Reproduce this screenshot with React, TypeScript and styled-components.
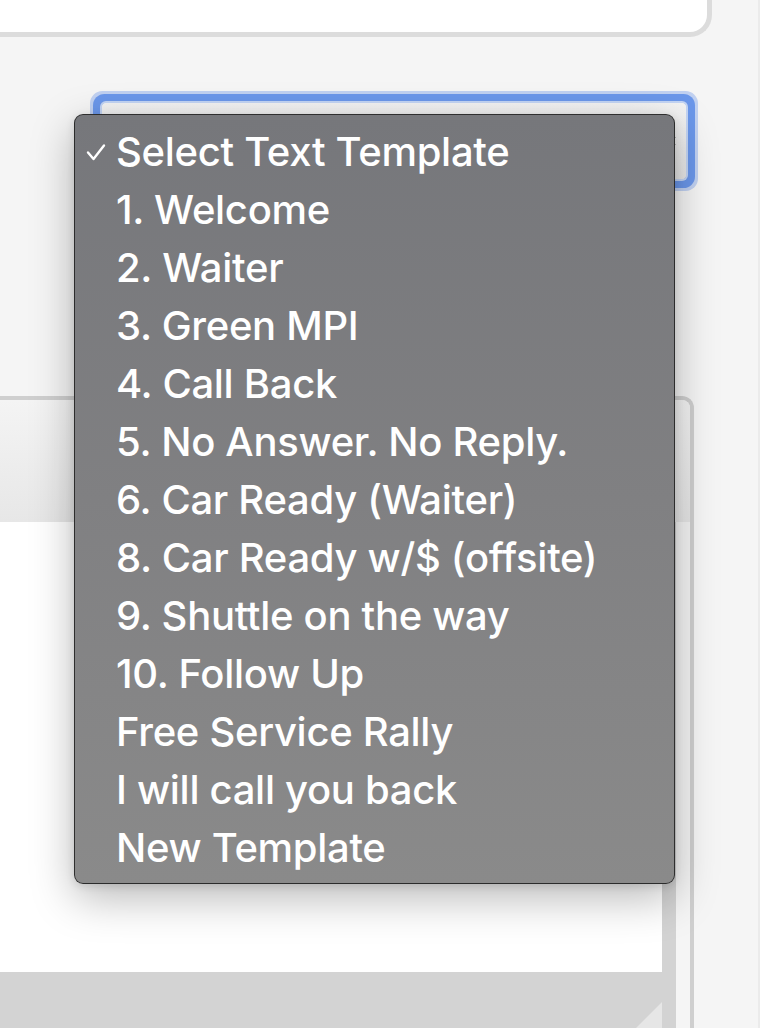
import styled, { createGlobalStyle } from 'styled-components';

const templates = [
  'Select Text Template',
  '1. Welcome',
  '2. Waiter',
  '3. Green MPI',
  '4. Call Back',
  '5. No Answer. No Reply.',
  '6. Car Ready (Waiter)',
  '8. Car Ready w/$ (offsite)',
  '9. Shuttle on the way',
  '10. Follow Up',
  'Free Service Rally',
  'I will call you back',
  'New Template',
];

const GlobalStyle = createGlobalStyle`
  html, body {
    margin: 0;
    padding: 0;
    background: #f5f5f5;
  }

  body {
    font-family: Inter, 'Liberation Sans', sans-serif;
  }
`;

const Page = styled.div`
  width: 760px;
  height: 1028px;
  box-sizing: border-box;
  display: flex;
  flex-direction: column;
  overflow: hidden;
  background: #f5f5f5;
  border-right: 2px solid #ebebeb;
`;

const TopCard = styled.div`
  flex: none;
  margin-left: -20px;
  width: 732px;
  height: 37px;
  box-sizing: border-box;
  background: #fff;
  border-right: 5px solid #dcdcdc;
  border-bottom: 5px solid #dcdcdc;
  border-bottom-right-radius: 22px;
`;

const SelectRow = styled.div`
  flex: none;
  display: flex;
  padding-left: 102px;
  margin-top: 66px;
`;

const SelectBox = styled.div`
  position: relative;
  width: 584px;
  height: 76px;
  box-sizing: border-box;
  display: flex;
  align-items: center;
  justify-content: flex-end;
  padding-right: 8px;
  border-radius: 4px;
  background: linear-gradient(180deg, #f3f3f3, #e7e7e7);
  box-shadow:
    0 0 0 2px #c4d5f4,
    0 0 0 9px #6b97ea,
    0 0 0 12px rgba(107, 151, 234, 0.38);
`;

const Arrows = styled.svg`
  width: 14px;
  height: 24px;
`;

const Menu = styled.ul`
  position: absolute;
  z-index: 10;
  left: -28px;
  top: 11px;
  width: 601px;
  height: 770px;
  box-sizing: border-box;
  margin: 0;
  padding: 8px 0;
  list-style: none;
  border: 1px solid rgba(30, 30, 30, 0.85);
  border-radius: 9px;
  background: linear-gradient(180deg, #76777b 0%, #808082 50%, #8a8a8a 100%);
  box-shadow: 0 14px 44px rgba(0, 0, 0, 0.28), 0 2px 8px rgba(0, 0, 0, 0.12);
`;

const Item = styled.li`
  display: flex;
  align-items: center;
  height: 58px;
  padding-left: 41px;
  position: relative;
  color: #fff;
  font-size: 40px;
  font-weight: 500;
  line-height: 58px;
  letter-spacing: -0.3px;
  white-space: nowrap;
`;

const Check = styled.svg`
  position: absolute;
  left: 11px;
  top: 20px;
  width: 20px;
  height: 18px;
`;

const Panel = styled.div`
  flex: 1;
  margin-top: 217px;
  margin-left: -20px;
  width: 714px;
  box-sizing: border-box;
  display: flex;
  flex-direction: column;
  border-top: 4px solid #cfcfcf;
  border-right: 4px solid #cfcfcf;
  border-top-right-radius: 12px;
  overflow: hidden;
`;

const PanelHeader = styled.div`
  flex: none;
  height: 122px;
  background: linear-gradient(180deg, #f4f4f4, #e7e7e7);
`;

const PanelBody = styled.div`
  flex: 1;
  display: flex;
  flex-direction: column;
  padding-right: 14px;
  background: #f5f5f5;
`;

const TextArea = styled.div`
  flex: none;
  height: 450px;
  background: #fff;
  border-right: 14px solid #d3d3d3;
`;

const Footer = styled.div`
  flex: 1;
  display: flex;
  justify-content: flex-end;
  align-items: flex-start;
  padding-top: 30px;
  padding-right: 14px;
  background: #d3d3d3;
`;

const Grip = styled.svg`
  width: 26px;
  height: 26px;
`;

export default function App() {
  return (
    <Page>
      <GlobalStyle />
      <TopCard />
      <SelectRow>
        <SelectBox>
          <Arrows viewBox="0 0 14 24">
            <path d="M3 9l4-4 4 4M3 15l4 4 4-4" fill="none" stroke="#333" strokeWidth="1.6" />
          </Arrows>
          <Menu>
            {templates.map((label, index) => (
              <Item key={label}>
                {index === 0 && (
                  <Check viewBox="0 0 20 18">
                    <path
                      d="M2 9.5l5.5 6.5L18 2.5"
                      fill="none"
                      stroke="#fff"
                      strokeWidth="2.4"
                      strokeLinecap="round"
                      strokeLinejoin="round"
                    />
                  </Check>
                )}
                {label}
              </Item>
            ))}
          </Menu>
        </SelectBox>
      </SelectRow>
      <Panel>
        <PanelHeader />
        <PanelBody>
          <TextArea />
          <Footer>
            <Grip viewBox="0 0 26 26">
              <path d="M26 0V26H0Z" fill="#e6e6e6" />
            </Grip>
          </Footer>
        </PanelBody>
      </Panel>
    </Page>
  );
}
